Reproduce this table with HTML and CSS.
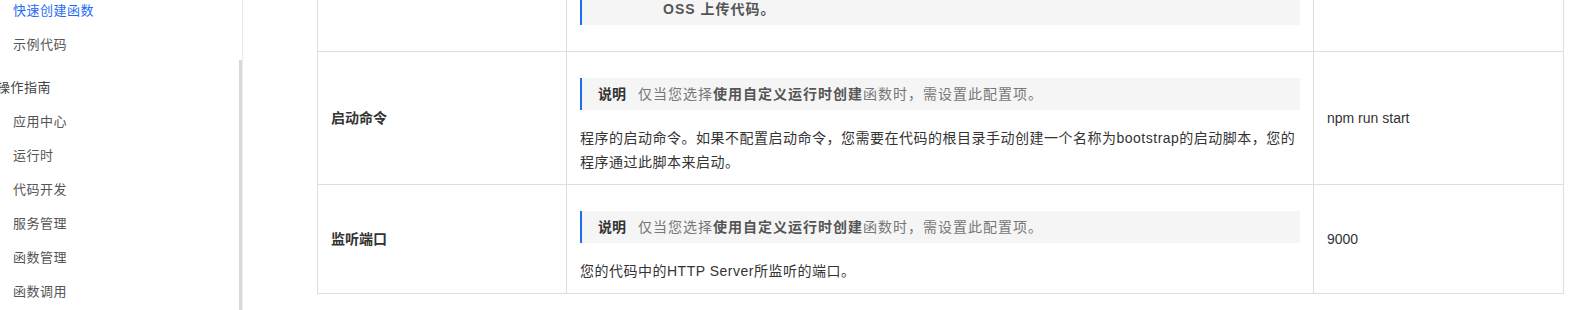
FILE: index.html
```html
<!DOCTYPE html>
<html lang="zh-CN">
<head>
<meta charset="utf-8">
<title>配置项说明</title>
<link rel="stylesheet" href="styles.css">
</head>
<body>
<div class="page">
  <aside class="sidebar">
    <ul class="nav">
      <li class="item active">快速创建函数</li>
      <li class="item">示例代码</li>
      <li class="group">操作指南</li>
      <li class="item">应用中心</li>
      <li class="item">运行时</li>
      <li class="item">代码开发</li>
      <li class="item">服务管理</li>
      <li class="item">函数管理</li>
      <li class="item">函数调用</li>
    </ul>
    <div class="thumb"></div>
  </aside>
  <main class="main">
    <div class="params">
      <div class="cell name cut"></div>
      <div class="cell desc cut">
        <div class="note cut"><span class="indent"><b>OSS 上传代码。</b></span></div>
      </div>
      <div class="cell value cut"></div>

      <div class="cell name">启动命令</div>
      <div class="cell desc">
        <div class="note"><span class="label">说明</span><span class="note-text">仅当您选择<b>使用自定义运行时创建</b>函数时，需设置此配置项。</span></div>
        <p class="para">程序的启动命令。如果不配置启动命令，您需要在代码的根目录手动创建一个名称为bootstrap的启动脚本，您的程序通过此脚本来启动。</p>
      </div>
      <div class="cell value">npm run start</div>

      <div class="cell name">监听端口</div>
      <div class="cell desc">
        <div class="note"><span class="label">说明</span><span class="note-text">仅当您选择<b>使用自定义运行时创建</b>函数时，需设置此配置项。</span></div>
        <p class="para">您的代码中的HTTP Server所监听的端口。</p>
      </div>
      <div class="cell value">9000</div>
    </div>
  </main>
</div>
</body>
</html>
```

FILE: styles.css
```css
* { box-sizing: border-box; }

html, body {
  margin: 0;
  padding: 0;
  background: #fff;
}

body {
  font-family: "Liberation Sans", "Noto Sans CJK SC", sans-serif;
  font-size: 14px;
  color: #333;
}

.page {
  display: flex;
  height: 310px;
  overflow: hidden;
}

.sidebar {
  position: relative;
  flex: 0 0 243px;
  width: 243px;
  border-right: 1px solid #ebebeb;
  overflow: hidden;
}

.nav {
  list-style: none;
  margin: -6px 0 0 -3px;
  padding: 0;
}

.item {
  padding-left: 16px;
  line-height: 34px;
  font-size: 13px;
  letter-spacing: 0.5px;
  color: #555;
  white-space: nowrap;
}

.item.active {
  color: #1f6cf4;
}

.group {
  margin-top: 9px;
  line-height: 34px;
  font-size: 13px;
  letter-spacing: 0.5px;
  color: #444;
  white-space: nowrap;
}

.thumb {
  position: absolute;
  right: 0;
  top: 60px;
  bottom: 0;
  width: 3px;
  background: #d9d9d9;
}

.main {
  flex: 1 1 auto;
  padding-left: 74px;
}

.params {
  display: grid;
  grid-template-columns: 249px 747px 250px;
  width: 1247px;
  margin-top: -3px;
  border-left: 1px solid #dedede;
}

.cell {
  border-right: 1px solid #dedede;
  border-bottom: 1px solid #dedede;
}

.name, .value {
  display: flex;
  align-items: center;
  padding: 0 12px 0 13px;
  line-height: 24px;
}

.name {
  font-weight: bold;
  color: #333;
}

.value {
  color: #333;
}

.desc {
  padding: 12px 13px 10px 13px;
}

.desc.cut {
  padding-top: 0;
}

.note {
  margin: 14px 0 0;
  padding: 4px 0 4px 16px;
  border-left: 2px solid #1f6cf4;
  background: #f5f5f5;
  line-height: 24px;
  white-space: nowrap;
}

.note.cut {
  margin-top: 0;
  padding-top: 0;
  margin-bottom: 16px;
}

.label {
  font-weight: bold;
  color: #333;
  margin-right: 12px;
}

.note-text {
  color: #777;
  letter-spacing: 1px;
}

.note-text b {
  color: #555;
}

.indent {
  padding-left: 65px;
  color: #555;
  letter-spacing: 1px;
}

.para {
  margin: 16px 0 0;
  line-height: 24px;
  letter-spacing: 0.5px;
  color: #333;
}
```
